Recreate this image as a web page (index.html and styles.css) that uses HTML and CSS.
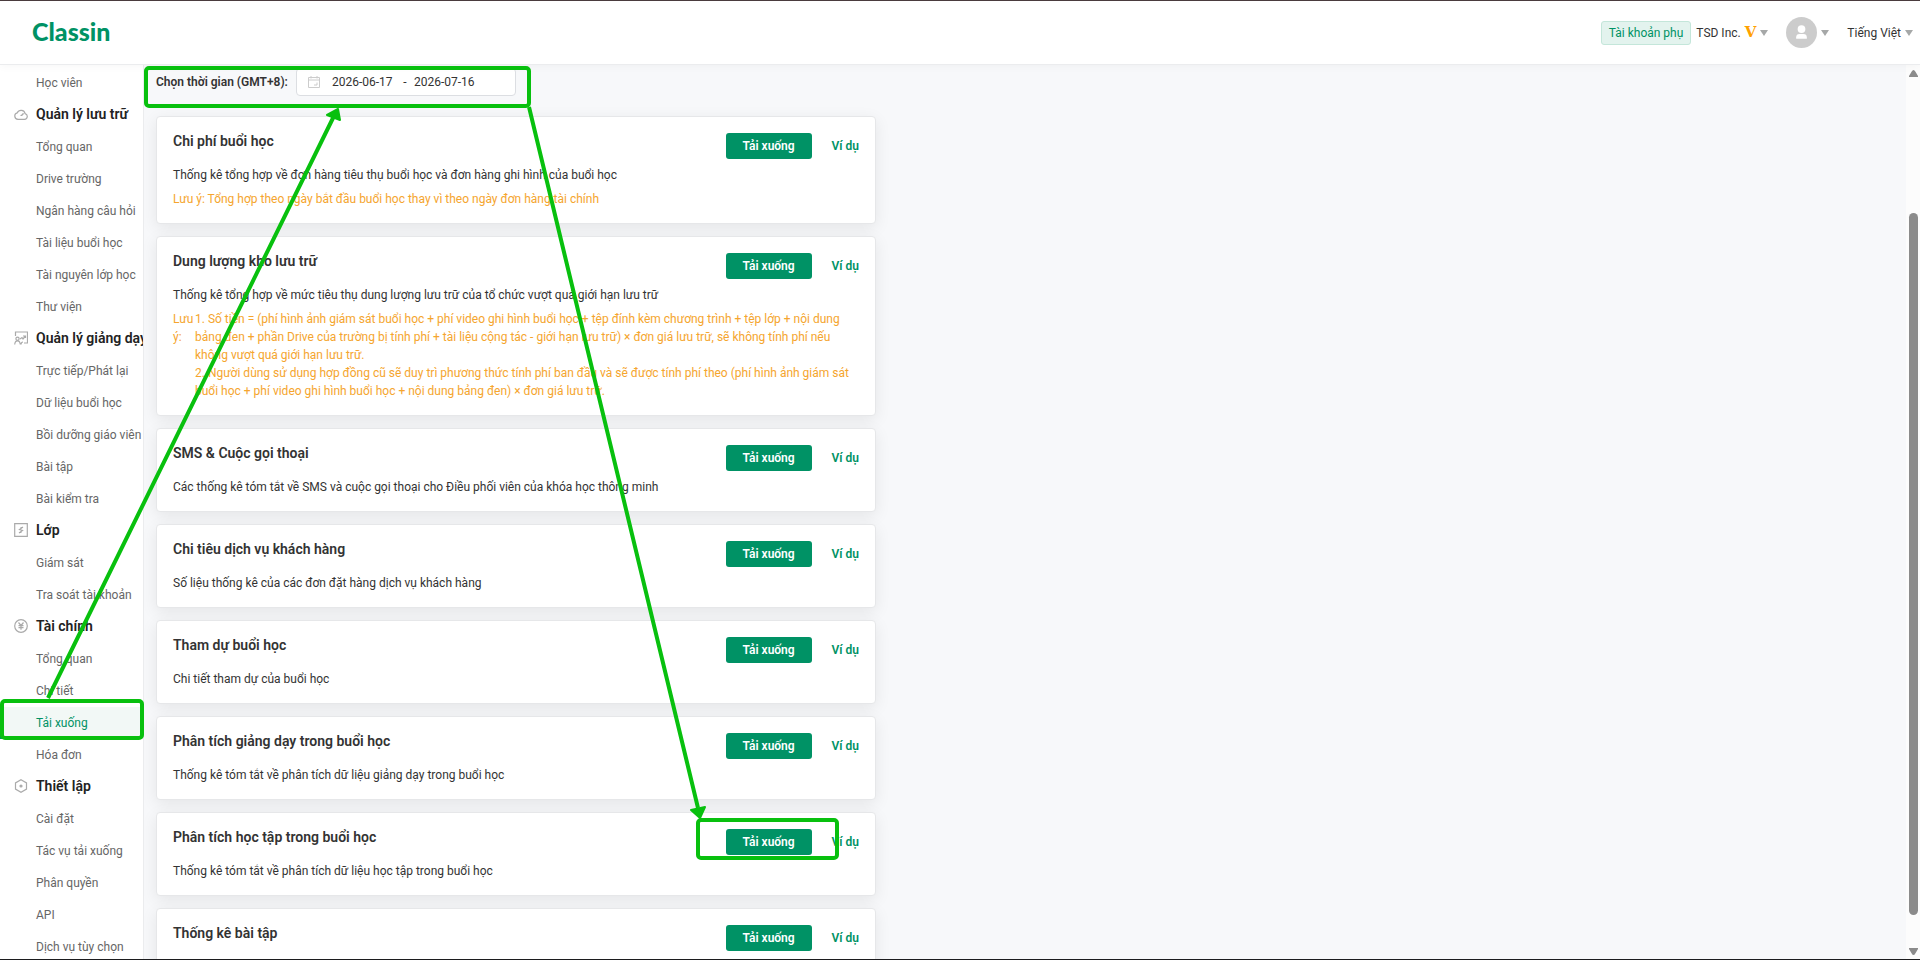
FILE: index.html
```
<!DOCTYPE html>
<html lang="vi">
<head>
  <meta charset="UTF-8" />
  <title>ClassIn - Tải xuống</title>
  <link rel="stylesheet" href="styles.css">
</head>
<body>

<header class="topbar">
  <a class="logo" href="#">Classin</a>
  <div class="account">
    <span class="badge">Tài khoản phụ</span>
    <button class="drop org" type="button">TSD Inc. <b class="vip">V</b><i class="caret"></i></button>
    <button class="drop user" type="button" aria-label="Tài khoản">
      <svg class="avatar" viewBox="0 0 32 32"><circle cx="16" cy="16" r="16" fill="#ccc"/><circle cx="16" cy="12.5" r="4" fill="#fff"/><path d="M10.500 22.500v-1.500q0-3.500 3.500-3.500h4q3.500 0 3.500 3.500v1.500z" fill="#fff"/></svg>
      <i class="caret"></i>
    </button>
    <button class="drop" type="button">Tiếng Việt<i class="caret"></i></button>
  </div>
</header>

<div class="page">
  <nav class="sidebar">
    <a href="#">Học viên</a>
    <h2><svg viewBox="0 0 14 14"><path d="M4 12.300h6.500a2.900 2.900 0 0 0 .6-5.700A4.100 4.100 0 0 0 3.300 5.800 3.300 3.300 0 0 0 4 12.300zM6.500 8.500q2.500 0 2.800-2.300"/></svg>Quản lý lưu trữ</h2>
    <a href="#">Tổng quan</a>
    <a href="#">Drive trường</a>
    <a href="#">Ngân hàng câu hỏi</a>
    <a href="#">Tài liệu buổi học</a>
    <a href="#">Tài nguyên lớp học</a>
    <a href="#">Thư viện</a>
    <h2><svg viewBox="0 0 14 14"><path d="M1.500 5V1h12v11H10M.7 13.500Q1 9.800 3.500 9.800T6.300 13.500M7 13.500Q7.200 11 9 11M6 8l2-1.500L9 8l2.500-3M9 5h2.500v2"/><circle cx="3.500" cy="7.700" r="1.600"/></svg>Quản lý giảng dạy</h2>
    <a href="#">Trực tiếp/Phát lại</a>
    <a href="#">Dữ liệu buổi học</a>
    <a href="#">Bồi dưỡng giáo viên</a>
    <a href="#">Bài tập</a>
    <a href="#">Bài kiểm tra</a>
    <h2><svg viewBox="0 0 14 14"><path d="M.7.700h12.600v12.600H.7zM9 4L5.500 6.500 8.500 7.500 5 10M6.500 4.500H9M5 9.500h2.500"/></svg>Lớp</h2>
    <a href="#">Giám sát</a>
    <a href="#">Tra soát tài khoản</a>
    <h2><svg viewBox="0 0 14 14"><circle cx="7" cy="7" r="6.300"/><path d="M4.500 3.500L7 6.500l2.500-3M4.500 6.700h5M4.500 8.700h5M7 6.500v4.300"/></svg>Tài chính</h2>
    <a href="#">Tổng quan</a>
    <a href="#">Chi tiết</a>
    <a href="#" class="active">Tải xuống</a>
    <a href="#">Hóa đơn</a>
    <h2><svg viewBox="0 0 14 14"><path d="M7 .800l5.500 3.100v6.200L7 13.200 1.500 10.100V3.900z"/><circle cx="7" cy="7" r="1" fill="#aaa"/></svg>Thiết lập</h2>
    <a href="#">Cài đặt</a>
    <a href="#">Tác vụ tải xuống</a>
    <a href="#">Phân quyền</a>
    <a href="#">API</a>
    <a href="#">Dịch vụ tùy chọn</a>
  </nav>

  <main class="content">
    <div class="filter">
      <label for="from">Chọn thời gian (GMT+8):</label>
      <div class="range">
        <svg viewBox="0 0 12 12"><path d="M.5 1.500h11v10H.5zM.5 4h11M3 0v2.500M9 0v2.500M6 9h3V6.500"/></svg>
        <input id="from" type="text" value="2026-06-17">
        <span>-</span>
        <input type="text" value="2026-07-16" aria-label="Đến ngày">
      </div>
    </div>

    <section class="card">
      <div class="actions"><button class="btn" type="button">Tải xuống</button><a href="#">Ví dụ</a></div>
      <h3>Chi phí buổi học</h3>
      <p>Thống kê tổng hợp về đơn hàng tiêu thụ buổi học và đơn hàng ghi hình của buổi học</p>
      <p class="note">Lưu ý: Tổng hợp theo ngày bắt đầu buổi học thay vì theo ngày đơn hàng tài chính</p>
    </section>

    <section class="card">
      <div class="actions"><button class="btn" type="button">Tải xuống</button><a href="#">Ví dụ</a></div>
      <h3>Dung lượng kho lưu trữ</h3>
      <p>Thống kê tổng hợp về mức tiêu thụ dung lượng lưu trữ của tổ chức vượt quá giới hạn lưu trữ</p>
      <div class="note split">
        <span>Lưu ý:</span>
        <div>
          1. Số tiền = (phí hình ảnh giám sát buổi học + phí video ghi hình buổi học + tệp đính kèm chương trình + tệp lớp + nội dung<br>
          bảng đen + phần Drive của trường bị tính phí + tài liệu cộng tác - giới hạn lưu trữ) × đơn giá lưu trữ, sẽ không tính phí nếu<br>
          không vượt quá giới hạn lưu trữ.<br>
          2. Người dùng sử dụng hợp đồng cũ sẽ duy trì phương thức tính phí ban đầu và sẽ được tính phí theo (phí hình ảnh giám sát<br>
          buổi học + phí video ghi hình buổi học + nội dung bảng đen) × đơn giá lưu trữ.
        </div>
      </div>
    </section>

    <section class="card">
      <div class="actions"><button class="btn" type="button">Tải xuống</button><a href="#">Ví dụ</a></div>
      <h3>SMS &amp; Cuộc gọi thoại</h3>
      <p>Các thống kê tóm tắt về SMS và cuộc gọi thoại cho Điều phối viên của khóa học thông minh</p>
    </section>

    <section class="card">
      <div class="actions"><button class="btn" type="button">Tải xuống</button><a href="#">Ví dụ</a></div>
      <h3>Chi tiêu dịch vụ khách hàng</h3>
      <p>Số liệu thống kê của các đơn đặt hàng dịch vụ khách hàng</p>
    </section>

    <section class="card">
      <div class="actions"><button class="btn" type="button">Tải xuống</button><a href="#">Ví dụ</a></div>
      <h3>Tham dự buổi học</h3>
      <p>Chi tiết tham dự của buổi học</p>
    </section>

    <section class="card">
      <div class="actions"><button class="btn" type="button">Tải xuống</button><a href="#">Ví dụ</a></div>
      <h3>Phân tích giảng dạy trong buổi học</h3>
      <p>Thống kê tóm tắt về phân tích dữ liệu giảng dạy trong buổi học</p>
    </section>

    <section class="card">
      <div class="actions"><button class="btn" type="button">Tải xuống</button><a href="#">Ví dụ</a></div>
      <h3>Phân tích học tập trong buổi học</h3>
      <p>Thống kê tóm tắt về phân tích dữ liệu học tập trong buổi học</p>
    </section>

    <section class="card">
      <div class="actions"><button class="btn" type="button">Tải xuống</button><a href="#">Ví dụ</a></div>
      <h3>Thống kê bài tập</h3>
    </section>
  </main>

  <div class="scrollbar">
    <svg viewBox="0 0 9 7"><path d="M4.500 0Q5.500 0 6.300 1.500L9 6v1H0V6L2.700 1.500Q3.500 0 4.500 0z"/></svg>
    <div class="track"><div class="thumb"></div></div>
    <svg viewBox="0 0 9 7"><path d="M4.500 7Q5.500 7 6.300 5.500L9 1V0H0v1L2.700 5.500Q3.500 7 4.500 7z"/></svg>
  </div>
</div>

<!-- walkthrough marks drawn over the page -->
<svg class="marks" width="880" height="900" viewBox="0 0 880 900">
  <g fill="none" stroke="#08c00e" stroke-width="4">
    <rect x="146" y="68" width="383" height="38" rx="3"/>
    <rect x="2" y="701" width="140" height="37" rx="3"/>
    <rect x="698" y="820" width="139" height="38" rx="3"/>
    <path d="M48 698L334 116M529 107L698 808"/>
  </g>
  <g fill="#08c00e" stroke="#08c00e" stroke-width="2" stroke-linejoin="round">
    <path d="M338 109L327 115L340 120z"/>
    <path d="M700 818L691 810L705 807z"/>
  </g>
</svg>

</body>
</html>
```

FILE: styles.css
```
* { box-sizing: border-box; }
body { margin: 0; height: 100vh; display: flex; flex-direction: column; overflow: hidden; border-top: 1px solid #4a3b3e; border-bottom: 1px solid #1c1c1e; background: #f7f8fa; color: #333; font-family: Roboto, "Noto Sans", sans-serif; font-size: 12px; line-height: 18px; }
a { color: inherit; text-decoration: none; }
button, input { font: inherit; color: inherit; border: 0; padding: 0; background: none; }
h2, h3, p { margin: 0; }

.topbar { position: relative; z-index: 1; flex: none; height: 64px; display: flex; align-items: center; justify-content: space-between; padding: 0 7px 0 32px; background: #fff; border-bottom: 1px solid #ebecee; box-shadow: 0 2px 8px rgba(0, 0, 0, .03); }
.logo { color: #009265; font-family: Lato, sans-serif; font-size: 25px; font-weight: 900; line-height: 28px; margin-bottom: 4px; }
.account { display: flex; align-items: center; }
.badge { padding: 2px 7px; margin-right: 5px; border: 1px solid #c4e6da; border-radius: 3px; background: #e3f3ee; color: #009265; }
.drop { display: flex; align-items: center; gap: 4px; }
.org, .user { margin-right: 18px; }
.vip { margin-bottom: 2px; color: #ffa200; font-family: "DejaVu Serif", serif; font-size: 15px; }
.caret { border: 4px solid transparent; border-top: 6px solid #a6a8a8; border-bottom: 0; }
.avatar { width: 31px; height: 31px; }

.page { flex: 1; min-height: 0; display: flex; }
.sidebar { flex: none; width: 144px; padding-top: 2px; overflow: hidden; background: #fff; border-right: 1px solid #ebecee; white-space: nowrap; }
.sidebar a { display: block; height: 32px; padding-left: 36px; line-height: 32px; color: #666; }
.sidebar h2 { display: flex; align-items: center; gap: 8px; height: 32px; padding: 0 0 3px 14px; font-size: 14px; font-weight: 600; color: #222; }
.sidebar svg { flex: none; width: 14px; height: 14px; fill: none; stroke: #aaa; stroke-width: 1.2; }
.sidebar .active { padding-left: 32px; border-left: 4px solid #009265; background: #f2f8f6; color: #009265; }

.content { flex: 1; min-width: 0; padding: 2px 12px; overflow: hidden; }
.filter { display: flex; align-items: center; gap: 3px; height: 28px; margin-bottom: 21px; padding-top: 2px; }
.filter label { min-width: 137px; font-weight: 600; }
.range { display: flex; align-items: center; width: 220px; height: 28px; padding-left: 11px; border: 1px solid #dcdee2; border-radius: 4px; background: #fff; }
.range svg { width: 12px; height: 12px; margin-right: 12px; fill: none; stroke: #ccc; }
.range input { width: 64px; }
.range span { width: 18px; text-align: center; }

.card { max-width: 720px; min-height: 84px; margin-bottom: 12px; padding: 14px 16px 15px; border: 1px solid #e6e7e9; border-radius: 4px; background: #fff; box-shadow: 0 4px 16px rgba(0, 0, 0, .08); }
.card h3 { margin-bottom: 15px; font-size: 14px; font-weight: 600; line-height: 20px; }
.note { margin-top: 6px; color: #f5a52e; }
.split { display: flex; }
.split > span { flex: none; width: 22px; }
.split > div { white-space: nowrap; }
.actions { float: right; display: flex; align-items: center; gap: 20px; margin-top: 2px; color: #009265; font-weight: 600; }
.btn { width: 86px; height: 26px; border-radius: 3px; background: #009265; color: #fff; }

.scrollbar { flex: none; width: 14px; display: flex; flex-direction: column; align-items: center; padding: 5px 0 4px; background: #fcfcfc; }
.scrollbar svg { width: 9px; height: 7px; fill: #8b8b8b; }
.track { flex: 1; width: 9px; display: flex; flex-direction: column; padding: 136px 0 33px; }
.thumb { flex: 1; border-radius: 5px; background: #8b8b8b; }

.marks { position: absolute; top: 0; left: 0; z-index: 2; pointer-events: none; }
```
